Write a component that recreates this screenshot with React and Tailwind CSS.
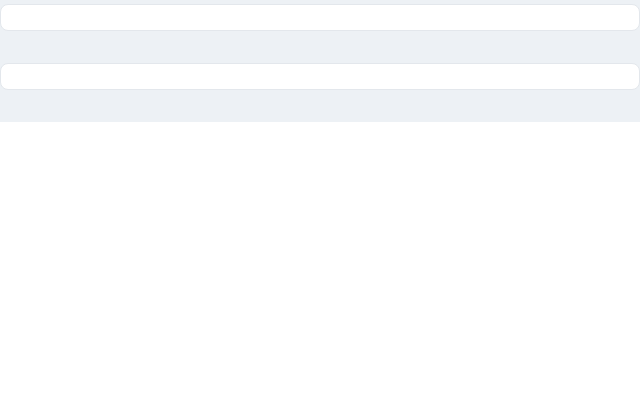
export default function App() {
  return (
    <div className="bg-[#edf1f5] pt-[4px] pb-[32px] flex flex-col gap-[32px]" style={{ fontFamily: '"Liberation Sans", sans-serif' }}>
      <div className="h-[27px] bg-white rounded-[8px] border border-[#e3e7ec]"></div>
      <div className="h-[27px] bg-white rounded-[8px] border border-[#e3e7ec]"></div>
    </div>
  );
}
